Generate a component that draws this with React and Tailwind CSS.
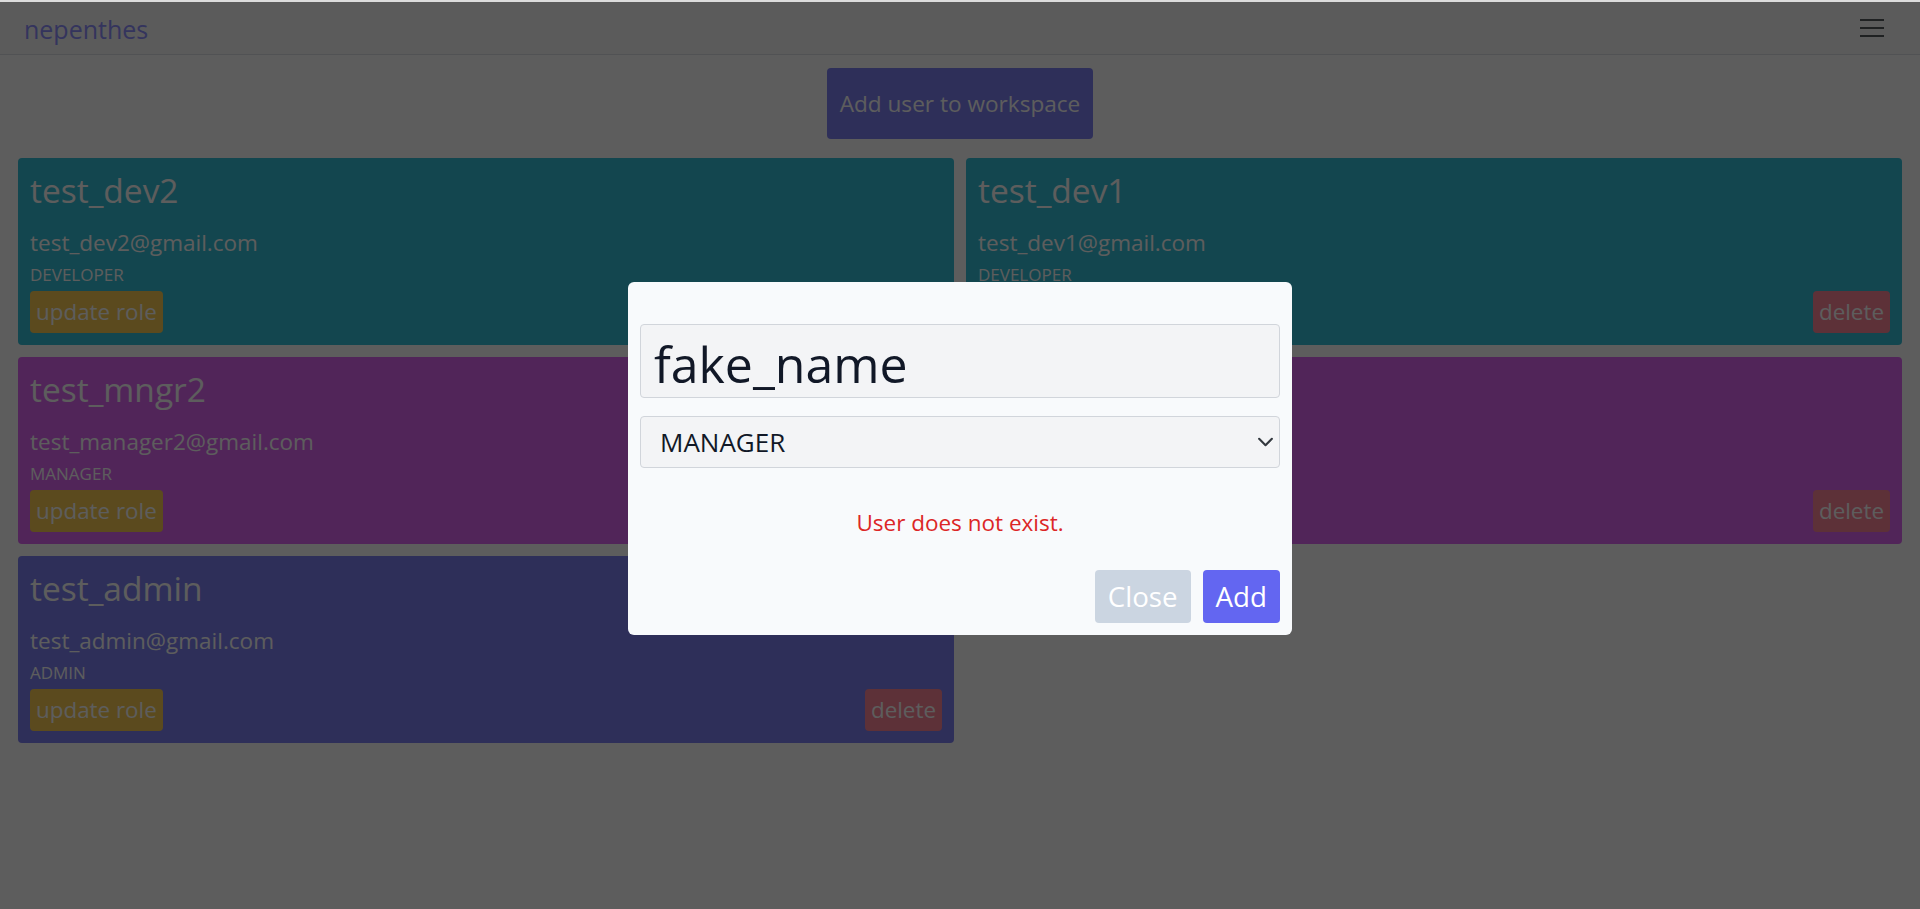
import { useState } from 'react';

// colours are the real ones; the backdrop dims them to what the screenshot shows
const members = [
  { id: 1, username: 'test_dev2', email: 'test_dev2@gmail.com', role: 'DEVELOPER', tone: 'bg-[#34c0d8]' },
  { id: 2, username: 'test_dev1', email: 'test_dev1@gmail.com', role: 'DEVELOPER', tone: 'bg-[#34c0d8]' },
  { id: 3, username: 'test_mngr2', email: 'test_manager2@gmail.com', role: 'MANAGER', tone: 'bg-[#de65f4]' },
  { id: 4, username: 'test_mngr1', email: 'test_manager1@gmail.com', role: 'MANAGER', tone: 'bg-[#de65f4]' },
  { id: 5, username: 'test_admin', email: 'test_admin@gmail.com', role: 'ADMIN', tone: 'bg-[#7e81f4]' },
];

const MemberCard = ({ member }) => (
  <div className={`${member.tone} rounded-[4px] p-3 text-white`}>
    <h3 className="text-[33.5px] leading-[40px]">{member.username}</h3>
    <h5 className="mt-[18px] text-[22.5px] leading-[30px]">{member.email}</h5>
    <p className="mt-[5px] text-[17px] leading-[24px]">{member.role}</p>
    <div className="mt-1 flex items-center justify-between">
      <button className="h-[42px] rounded-[4px] bg-[#f9cb52] px-1.5 text-[22.4px] leading-[30px]">update role</button>
      <button className="h-[42px] rounded-[4px] bg-[#ff8699] px-1.5 text-[22.4px] leading-[30px]">delete</button>
    </div>
  </div>
);

const AddUserModal = () => {
  const [username, setUsername] = useState('fake_name');
  const [role, setRole] = useState('MANAGER');

  return (
    <div className="w-[664px] rounded-[6px] bg-[#f8fafc] px-3 pt-[42px] pb-3">
      <input
        value={username}
        onChange={(e) => setUsername(e.target.value)}
        className="block h-[74px] w-full rounded-[4px] border border-[#d1d5db] bg-[#f3f4f6] px-[13px] pt-[6px] pb-0 text-[50px] text-[#111827] outline-none"
      />
      <div className="relative mt-[18px]">
        <select
          value={role}
          onChange={(e) => setRole(e.target.value)}
          className="block h-[52px] w-full appearance-none rounded-[4px] border border-[#d1d5db] bg-[#f3f4f6] pl-[19px] text-[26px] text-[#111827] outline-none"
        >
          <option value="DEVELOPER">DEVELOPER</option>
          <option value="MANAGER">MANAGER</option>
          <option value="ADMIN">ADMIN</option>
        </select>
        <svg
          className="pointer-events-none absolute right-[6px] top-1/2 -translate-y-1/2"
          width="17"
          height="17"
          viewBox="0 0 16 16"
          fill="none"
        >
          <path d="m2 5 6 6 6-6" stroke="#343a40" strokeWidth="2" strokeLinecap="round" strokeLinejoin="round" />
        </svg>
      </div>
      <p className="mt-[40px] text-center text-[22.5px] leading-[30px] text-[#dc2626]">User does not exist.</p>
      <div className="mt-[32px] flex justify-end gap-3">
        <button className="h-[53px] rounded-[4px] bg-[#cbd5e1] px-[13px] text-[27.7px] text-white">Close</button>
        <button className="h-[53px] rounded-[4px] bg-[#6366f1] px-[13px] text-[27.7px] text-white">Add</button>
      </div>
    </div>
  );
};

const App = () => {
  return (
    <div className="font-['Open_Sans',sans-serif]">
      <div className="h-[2px] bg-[#dcdcdc]" />
      <div className="relative h-[907px] overflow-hidden bg-white">
        <nav className="flex h-[53px] items-center justify-between border-b border-[#dee2e6] bg-[#f8f9fa] pl-6 pr-9">
          <span className="pt-[2px] text-[25px] leading-[34px] text-[#8f90ff]">nepenthes</span>
          <svg width="24" height="20" viewBox="0 0 24 20">
            <path d="M0 2h24M0 10h24M0 18h24" stroke="rgba(33,37,41,0.75)" strokeWidth="2" />
          </svg>
        </nav>

        <main className="px-[18px]">
          <div className="mt-[13px] flex justify-center">
            <button className="flex h-[71px] w-[266px] items-center justify-center rounded-[4px] bg-[#7e81f4] text-[22.6px] text-white">
              Add user to workspace
            </button>
          </div>
          <div className="mt-[19px] grid grid-cols-2 gap-3">
            {members.map((m) => (
              <MemberCard key={m.id} member={m} />
            ))}
          </div>
        </main>

        <div className="absolute inset-0 flex items-start justify-center bg-[rgba(0,0,0,0.635)] pt-[280px]">
          <AddUserModal />
        </div>
      </div>
    </div>
  );
};

export default App;
